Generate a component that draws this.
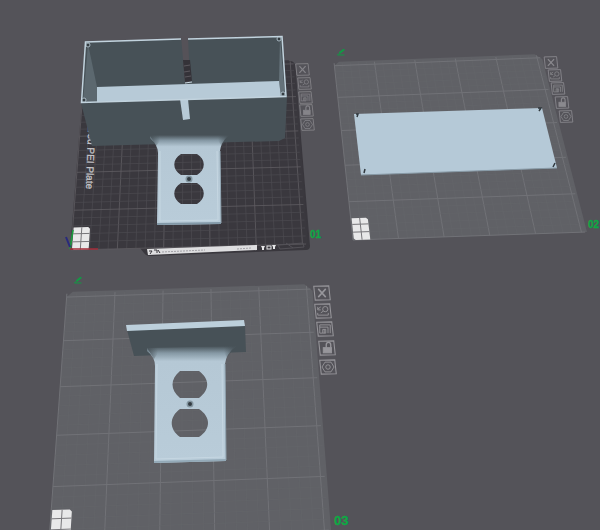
import type { ReactNode } from 'react';

type Point = [number, number];
type Quad = [Point, Point, Point, Point]; // tl, tr, br, bl

const VIEW_W = 600;
const VIEW_H = 530;
const PLATE_MM = 256;

// Maps plate coordinates (mm from the front left corner) to the screen.
function createProjector([p0, p1, p2, p3]: Quad) {
  const dx1 = p1[0] - p2[0];
  const dx2 = p3[0] - p2[0];
  const dx3 = p0[0] - p1[0] + p2[0] - p3[0];
  const dy1 = p1[1] - p2[1];
  const dy2 = p3[1] - p2[1];
  const dy3 = p0[1] - p1[1] + p2[1] - p3[1];
  const det = dx1 * dy2 - dx2 * dy1;
  const g = (dx3 * dy2 - dx2 * dy3) / det;
  const h = (dx1 * dy3 - dx3 * dy1) / det;

  return (x: number, y: number): Point => {
    const u = x / PLATE_MM;
    const v = 1 - y / PLATE_MM;
    const w = g * u + h * v + 1;
    return [
      ((p1[0] - p0[0] + g * p1[0]) * u + (p3[0] - p0[0] + h * p3[0]) * v + p0[0]) / w,
      ((p1[1] - p0[1] + g * p1[1]) * u + (p3[1] - p0[1] + h * p3[1]) * v + p0[1]) / w,
    ];
  };
}

const toPoints = (points: Point[]) => points.map((p) => p.join(',')).join(' ');

type PlateProps = {
  quad: Quad;
  fill: string;
  minor: string;
  major: string;
};

function Plate({ quad, fill, minor, major }: PlateProps) {
  const project = createProjector(quad);
  const steps = Array.from({ length: 26 }, (_, i) => i * 10);
  const outline = toPoints([
    project(0, 0),
    project(0, 250),
    project(6, 256),
    project(248, 256),
    project(256, 248),
    project(256, 0),
  ]);

  const line = (a: Point, b: Point, mm: number, key: string) => (
    <line
      key={key}
      x1={a[0]}
      y1={a[1]}
      x2={b[0]}
      y2={b[1]}
      className={mm % 50 === 0 ? major : minor}
    />
  );

  return (
    <g>
      <polygon points={outline} className={fill} />
      {steps.map((mm) => line(project(mm, 0), project(mm, 254), mm, `v${mm}`))}
      {steps.map((mm) => line(project(0, mm), project(254, mm), mm, `h${mm}`))}
    </g>
  );
}

// White 2x3 block in the front left corner of every plate
function Purge({ quad }: { quad: Quad }) {
  const project = createProjector(quad);
  const cell = (a: Point, b: Point) => (
    <line x1={a[0]} y1={a[1]} x2={b[0]} y2={b[1]} className="stroke-[#77767a]" />
  );
  return (
    <g>
      <polygon
        points={toPoints([
          project(1, 2),
          project(1, 28),
          project(17, 28),
          project(19, 26),
          project(19, 0),
          project(3, 0),
        ])}
        className="fill-[#e8e8e9]"
      />
      {cell(project(10, 0), project(10, 28))}
      {cell(project(1, 10), project(19, 10))}
      {cell(project(1, 20), project(19, 20))}
    </g>
  );
}

const PLATE_1: Quad = [[85, 65], [295, 60], [308, 244], [71, 250]];
const PLATE_2: Quad = [[334, 62], [541, 54], [587, 232], [353, 240]];
const PLATE_3: Quad = [[67, 292], [312, 284], [331, 530], [49, 541]];

const LIGHT_GRID = {
  fill: 'fill-[#606166]',
  minor: 'stroke-[#65666b] stroke-[0.5]',
  major: 'stroke-[#717277] stroke-1',
};

const ICONS: Record<string, ReactNode> = {
  delete: <path d="M7 5 L17 16 M17 5 L7 16" strokeWidth="2" />,
  orient: (
    <>
      <circle cx="15" cy="8" r="3.5" />
      <path d="M5 5 V9 H9 M5 8 L9 5 M5 13 V16 H19 V13 M9 13 L12 11" />
    </>
  ),
  arrange: (
    <>
      <path d="M5 5 H19 V16 M5 5 V16 H9 M5 8 H16 V16" />
      <path d="M9 11 H13 V16 H9 Z M11 11 V16" />
    </>
  ),
  lock: (
    <>
      <rect x="7" y="10" width="11" height="7" className="fill-current" />
      <path d="M11 10 V6 A3 3 0 0 1 17 6 V10" strokeWidth="1.8" />
    </>
  ),
  settings: (
    <>
      <path d="M8 4 H16 L20 10.5 L16 17 H8 L4 10.5 Z" />
      <circle cx="12" cy="10.5" r="3" />
    </>
  ),
};

type Control = { icon: string; x: number; y: number };
type Toolbar = { plate: string; width: number; height: number; color: string; controls: Control[] };

const TOOLBARS: Toolbar[] = [
  {
    plate: '01',
    width: 15,
    height: 13,
    color: 'text-[#858489]',
    controls: [
      { icon: 'delete', x: 302, y: 70 },
      { icon: 'orient', x: 304, y: 83 },
      { icon: 'arrange', x: 305, y: 97 },
      { icon: 'lock', x: 306, y: 110 },
      { icon: 'settings', x: 307, y: 124 },
    ],
  },
  {
    plate: '02',
    width: 16,
    height: 13,
    color: 'text-[#8a898e]',
    controls: [
      { icon: 'delete', x: 551, y: 62 },
      { icon: 'orient', x: 555, y: 75 },
      { icon: 'arrange', x: 558, y: 88 },
      { icon: 'lock', x: 562, y: 102 },
      { icon: 'settings', x: 566, y: 116 },
    ],
  },
  {
    plate: '03',
    width: 18,
    height: 16,
    color: 'text-[#97969b]',
    controls: [
      { icon: 'delete', x: 322, y: 293 },
      { icon: 'orient', x: 323, y: 311 },
      { icon: 'arrange', x: 325, y: 329 },
      { icon: 'lock', x: 327, y: 348 },
      { icon: 'settings', x: 328, y: 367 },
    ],
  },
];

const EDIT_BUTTONS = [
  { plate: '02', x: 341, y: 52 },
  { plate: '03', x: 78, y: 280 },
];

const place = (x: number, y: number, width: number, height: number) => ({
  left: `${((x - width / 2) / VIEW_W) * 100}%`,
  top: `${((y - height / 2) / VIEW_H) * 100}%`,
  width: `${(width / VIEW_W) * 100}%`,
  height: `${(height / VIEW_H) * 100}%`,
});

function PlateToolbar({ plate, width, height, color, controls }: Toolbar) {
  return (
    <>
      {controls.map(({ icon, x, y }) => (
        <button
          key={icon}
          type="button"
          aria-label={`${icon} plate ${plate}`}
          className={`absolute cursor-pointer hover:text-white ${color}`}
          style={place(x, y, width, height)}
        >
          <svg
            viewBox="0 0 24 21"
            fill="none"
            stroke="currentColor"
            strokeWidth="1.2"
            className="block size-full"
          >
            <path d="M1 1.5 L21 1 L23 19.5 L3 20 Z" strokeWidth="1.4" />
            {ICONS[icon]}
          </svg>
        </button>
      ))}
    </>
  );
}

function OutletBox() {
  return (
    <g>
      {/* back and side walls */}
      <polygon points="85,42 282,36 287,97 81,103" className="fill-[#475157]" />
      <polygon points="88,44 97,87 97,102 83,102" className="fill-[#5c686f]" />
      <polygon points="280,38 279,82 281,96 285,96" className="fill-[#65727a]" />
      <polygon points="97,87 279,81 281,97 97,102" className="fill-[#b7cad7]" />
      {/* cable slot in the back wall */}
      <polygon points="181,36 188,36 190,82 185,83" className="fill-[#555258]" />
      <polygon points="183,60 190,60 192,81 185,82" className="fill-[#343238]" />
      <path d="M184 66 L190 65 M184 72 L190 71 M185 77 L191 76" className="stroke-[#5b585e]" />
      <path d="M185 83 L192 82" className="stroke-[#c9d8e1]" />
      {/* front wall */}
      <polygon points="81,103 287,97 285,138 279,141 92,146" className="fill-[#475157]" />
      <polygon points="180,99 188,99 190,119 183,120" className="fill-[#b7cad7]" />
      {/* rim */}
      <path
        d="M181 39 L85.500 42 L81.500 102.500 L286 96.500 L282 36.500 L188 39"
        className="fill-none stroke-[#c2d3de] stroke-[1.5]"
      />
      <g className="fill-[#333b40] stroke-[#c2d3de] stroke-[0.8]">
        <circle cx="88" cy="45" r="2" />
        <circle cx="279" cy="39" r="2" />
        <circle cx="84" cy="100" r="2" />
        <circle cx="283" cy="94" r="2" />
      </g>
    </g>
  );
}

function Screw({ x, y }: { x: number; y: number }) {
  return (
    <g>
      <circle cx={x} cy={y} r="3.5" className="fill-[#8496a1]" />
      <circle cx={x} cy={y} r="2" className="fill-[#333b42]" />
    </g>
  );
}

function Scene() {
  return (
    <svg viewBox="0 0 600 530" className="block size-full font-['Liberation_Sans',sans-serif]">
      <defs>
        <linearGradient id="neck" x1="0" y1="0" x2="0" y2="1">
          <stop offset="0" stopColor="#475157" />
          <stop offset="0.06" stopColor="#8598a4" />
          <stop offset="0.13" stopColor="#b5c8d5" />
          <stop offset="1" stopColor="#b9ccd9" />
        </linearGradient>
        <linearGradient id="flareLeft">
          <stop offset="0" stopColor="#475157" />
          <stop offset="1" stopColor="#475157" stopOpacity="0" />
        </linearGradient>
        <linearGradient id="flareRight" x1="1" x2="0">
          <stop offset="0" stopColor="#475157" />
          <stop offset="1" stopColor="#475157" stopOpacity="0" />
        </linearGradient>
      </defs>

      {/* Plate 01 */}
      <path
        d="M85 62 L290 61 Q294 61 295 65 L310 246 Q310 250 306 250 L150 256 Q146 256 144 253 L140 248 L70 250 Z"
        className="fill-[#39373d]"
      />
      <Plate
        quad={PLATE_1}
        fill="fill-[#3a383e]"
        minor="stroke-[#4c4a50] stroke-[0.7]"
        major="stroke-[#5f5d62] stroke-[0.8]"
      />
      <text
        transform="translate(86 189) rotate(92)"
        textAnchor="end"
        className="fill-[#c4c3c7] stroke-[#c4c3c7] stroke-[0.3] text-[10px]"
      >
        Textured PEI Plate
      </text>
      <polygon points="147,249 257,245 257,250 148,255" className="fill-[#dedee0]" />
      <path
        d="M149 251 L152 251 L150 254 M154 250 L157 250 L157 253 M158 250 L160 253"
        className="fill-none stroke-[#343238]"
      />
      <path
        d="M162 252 L205 250 M237 249 L251 248"
        className="stroke-[#a3a2a7] stroke-1 [stroke-dasharray:2_1]"
      />
      <path
        d="M261 246 L265 246 L264 248 L264 250 L262 250 L262 248 Z M272 245 L276 245 L275 247 L275 249 L273 249 L273 247 Z"
        className="fill-[#e6e6e8]"
      />
      <rect x="267" y="246" width="4" height="3" className="fill-none stroke-[#e6e6e8]" />
      <path d="M278 245 L303 243 L304 247 L280 249 Z M286 243 L293 248" className="fill-none stroke-[#535157]" />
      <Purge quad={PLATE_1} />
      <path d="M70 249 L73 230" className="stroke-[#16a13c] stroke-[1.5]" />
      <path d="M70 249 L98 249" className="stroke-[#a52c3a] stroke-[1.5]" />
      <path d="M70 247 L66 237" className="stroke-[#292a7d] stroke-2" />
      <OutletBox />
      <path
        fillRule="evenodd"
        fill="url(#neck)"
        d="M150 135 H229 Q221 142 220 151 L221 224 L157 225 L158 153 Q158 145 150 138 Z
          M181 154 H197 C206 159 206 170 197 175 H181 C172 170 172 159 181 154 Z
          M181 183 H197 C206 188 206 199 197 204 H181 C172 199 172 188 181 183 Z"
      />
      <path d="M149 134 H160 V141 L156 146 Z" fill="url(#flareLeft)" />
      <path d="M230 134 H218 V141 L222 146 Z" fill="url(#flareRight)" />
      <path d="M160 151 V221 L218 220 L217 151" className="fill-none stroke-[#c6d7e2] stroke-1" />
      <path d="M157 224 L221 223" className="stroke-[#8399a8] stroke-2" />
      <path d="M220 151 L221 223" className="stroke-[#94a8b5] stroke-1" />
      <Screw x={189} y={179} />

      {/* Plate 02 */}
      <Plate quad={PLATE_2} {...LIGHT_GRID} />
      <Purge quad={PLATE_2} />
      <polygon points="354,114 542,108 557,168 361,175" className="fill-[#b5c9d7]" />
      <path d="M361 175 L557 168" className="stroke-[#889aa6] stroke-1" />
      <path
        d="M356 114 L358 114 L357 117 M538 108 L541 108 L539 111 M364 173 L365 169 M553 167 L555 163"
        className="fill-none stroke-[#30383e] stroke-[1.5]"
      />

      {/* Plate 03 */}
      <Plate quad={PLATE_3} {...LIGHT_GRID} />
      <Purge quad={PLATE_3} />
      <polygon points="127,330 245,325 246,352 134,356" className="fill-[#475157]" />
      <polygon points="126,325 244,320 245,326 127,331" className="fill-[#bccfdb]" />
      <path
        fillRule="evenodd"
        fill="url(#neck)"
        d="M147 348 L236 346 Q226 354 225 364 L226 461 L154 463 L155 366 Q155 357 147 351 Z
          M180 371 H199 C210 379 210 390 199 398 H180 C170 390 170 379 180 371 Z
          M180 409 H199 C211 417 211 429 199 437 H180 C169 429 169 417 180 409 Z"
      />
      <path d="M146 346 H158 V353 L154 359 Z" fill="url(#flareLeft)" />
      <path d="M237 344 H224 V352 L227 358 Z" fill="url(#flareRight)" />
      <path d="M157 364 L156 459 L223 457 L222 364" className="fill-none stroke-[#c6d7e2] stroke-1" />
      <path d="M154 462 L226 460" className="stroke-[#93a9b7] stroke-2" />
      <path d="M225 364 L226 460" className="stroke-[#91a5b2] stroke-1" />
      <Screw x={190} y={404} />

      {/* Plate numbers */}
      <g className="fill-[#0da944] stroke-[#0da944] stroke-[0.3] font-bold">
        <text x="310" y="238" className="text-[10px]">01</text>
        <text x="588" y="228" className="text-[10px]">02</text>
        <text x="334" y="525" className="text-[13px]">03</text>
      </g>
    </svg>
  );
}

export default function App() {
  return (
    <main className="min-h-screen bg-[#545359]">
      <div className="relative aspect-[60/53] w-full overflow-hidden">
        <Scene />
        {TOOLBARS.map((toolbar) => (
          <PlateToolbar key={toolbar.plate} {...toolbar} />
        ))}
        {EDIT_BUTTONS.map(({ plate, x, y }) => (
          <button
            key={plate}
            type="button"
            aria-label={`rename plate ${plate}`}
            className="absolute cursor-pointer text-[#129a45]"
            style={place(x, y, 10, 8)}
          >
            <svg viewBox="0 0 20 16" fill="none" stroke="currentColor" className="block size-full">
              <path d="M17 3 L6 11 L3 14 H17" strokeWidth="2" />
              <path d="M16 3 L7 10" strokeWidth="4" />
            </svg>
          </button>
        ))}
      </div>
    </main>
  );
}
